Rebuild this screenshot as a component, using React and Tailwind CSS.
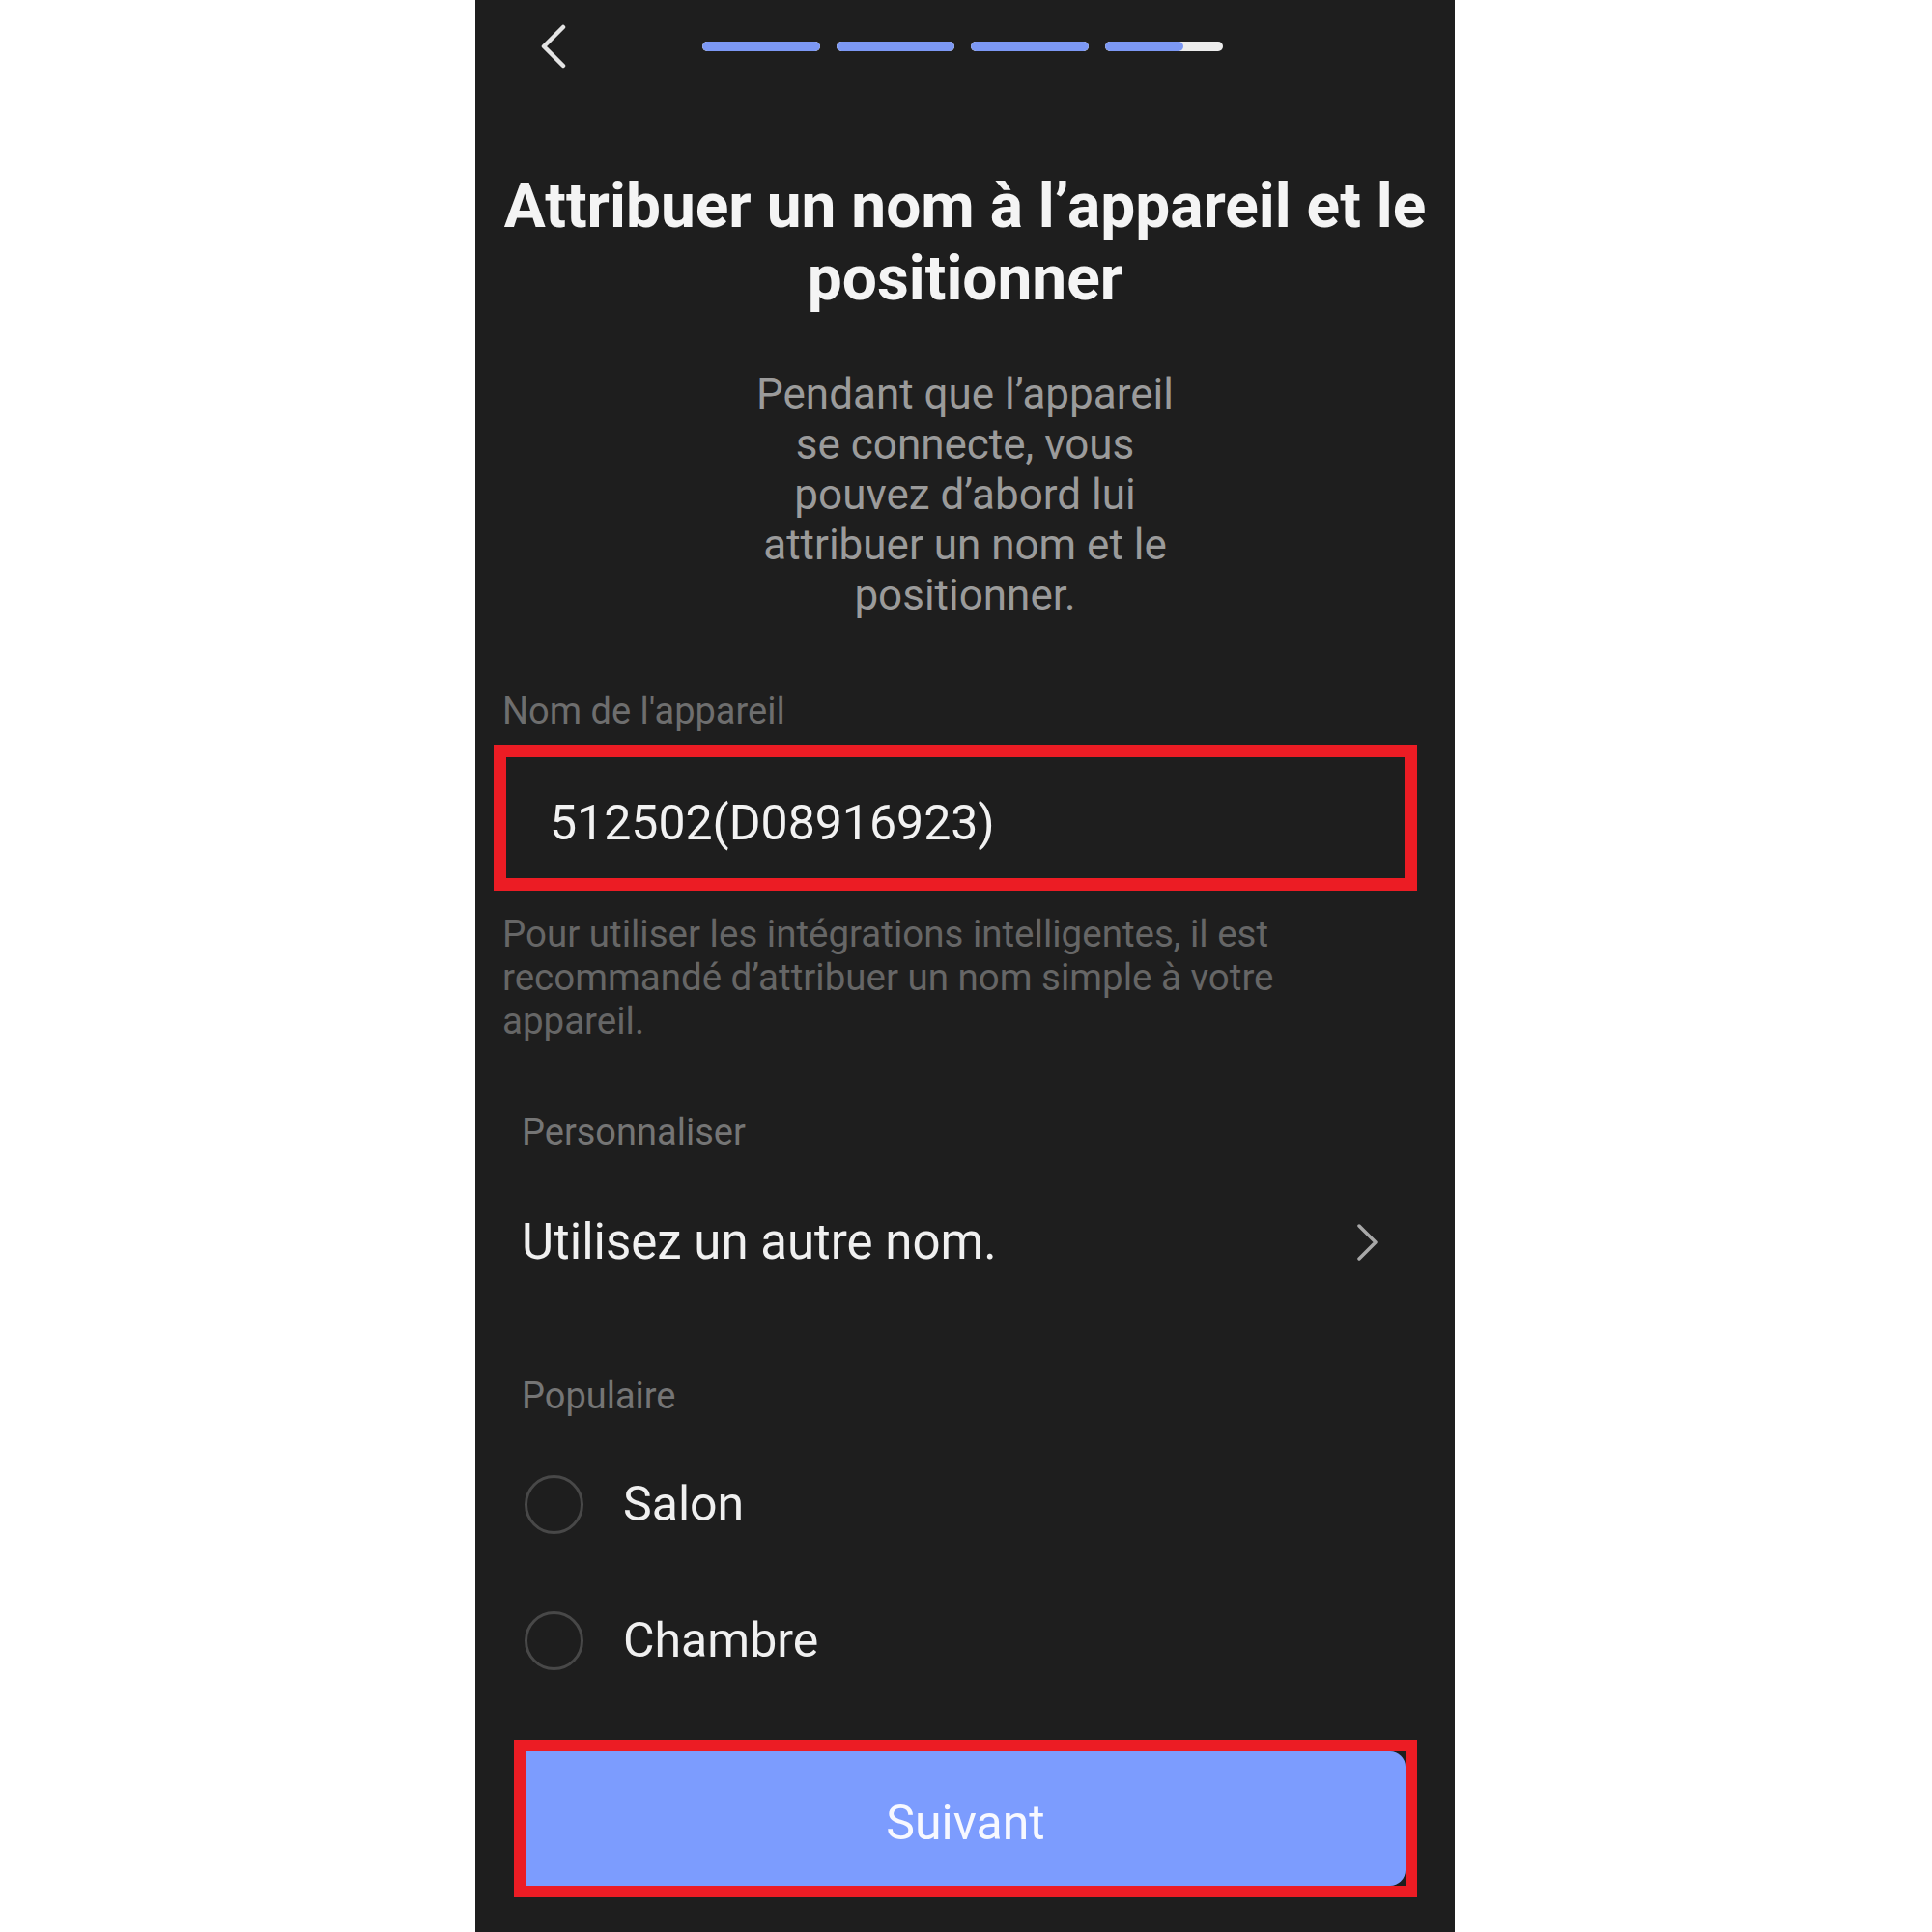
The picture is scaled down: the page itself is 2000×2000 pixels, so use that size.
import React from "react";

function Bar({ fill = 100 }) {
  return (
    <div className="w-[122px] h-[10px] rounded-full bg-[#ececec] overflow-hidden flex">
      <div className="h-full bg-[#7c98f4] rounded-full" style={{ width: `${fill}%` }} />
    </div>
  );
}

function Radio({ label, className = "" }) {
  return (
    <div className={`flex items-center h-[62px] ${className}`}>
      <div className="ml-[3px] w-[61px] h-[61px] rounded-full border-[3px] border-[#484848]" />
      <span className="ml-[41px] text-[50px] leading-[60px] text-[#f0f0f0]">{label}</span>
    </div>
  );
}

export default function App() {
  return (
    <div className="w-[2000px] h-[2000px] bg-white font-[Roboto,sans-serif]">
      <div className="ml-[492px] w-[1014px] h-[2000px] bg-[#1e1e1e] flex flex-col overflow-hidden">
        {/* header */}
        <div className="h-[96px] flex items-center">
          <svg className="ml-[68px]" width="26" height="46" viewBox="0 0 26 46" fill="none">
            <path d="M23 3 L3 23 L23 43" stroke="#e4e4e4" strokeWidth="4.5" strokeLinecap="round" strokeLinejoin="round" />
          </svg>
          <div className="ml-[141px] flex gap-[17px]">
            <Bar />
            <Bar />
            <Bar />
            <Bar fill={66} />
          </div>
        </div>

        {/* title */}
        <h1 className="mt-[80px] text-center text-[64px] leading-[75px] font-bold text-[#f4f4f4] whitespace-nowrap">
          Attribuer un nom à l’appareil et le
          <br />
          positionner
        </h1>

        <p className="mt-[56px] text-center text-[44px] leading-[52px] text-[#9b9b9b] whitespace-nowrap">
          Pendant que l’appareil
          <br />
          se connecte, vous
          <br />
          pouvez d’abord lui
          <br />
          attribuer un nom et le
          <br />
          positionner.
        </p>

        {/* device name */}
        <div className="px-[28px] flex flex-col">
          <div className="mt-[71px] text-[38px] leading-[46px] text-[#6e6e6e]">Nom de l'appareil</div>
          <div className="mt-[12px] -ml-[9px] w-[956px] h-[151px] border-[13px] border-[#ec1c24] flex items-center pl-[45px] pt-[11px]">
            <span className="text-[50px] leading-[60px] text-[#f2f2f2]">512502(D08916923)</span>
          </div>
          <div className="mt-[22px] w-[880px] text-[38.5px] leading-[45px] text-[#666666]">
            Pour utiliser les intégrations intelligentes, il est recommandé d’attribuer un nom simple à votre appareil.
          </div>
        </div>

        {/* personnaliser */}
        <div className="px-[48px] flex flex-col">
          <div className="mt-[70px] text-[38px] leading-[46px] text-[#757575]">Personnaliser</div>
          <div className="mt-[61px] h-[60px] flex items-center justify-between">
            <span className="text-[51px] leading-[60px] text-[#f0f0f0]">Utilisez un autre nom.</span>
            <svg className="mr-[31px]" width="24" height="40" viewBox="0 0 24 40" fill="none">
              <path d="M4 3 L21 20 L4 37" stroke="#a8a8a8" strokeWidth="3.5" strokeLinecap="round" strokeLinejoin="round" />
            </svg>
          </div>

          <div className="mt-[106px] text-[38px] leading-[46px] text-[#757575]">Populaire</div>
          <Radio label="Salon" className="mt-[58px]" />
          <Radio label="Chambre" className="mt-[79px]" />
        </div>

        {/* button */}
        <div className="mt-[72px] ml-[40px] w-[935px] h-[163px] border-[12px] border-[#ec1c24] bg-[#1e1e1e]">
          <div className="w-full h-full bg-[#7c9cfe] rounded-r-[16px] flex items-center justify-center pt-[8px]">
            <span className="text-[50px] leading-[60px] text-[#f7f8ff]">Suivant</span>
          </div>
        </div>
      </div>
    </div>
  );
}
